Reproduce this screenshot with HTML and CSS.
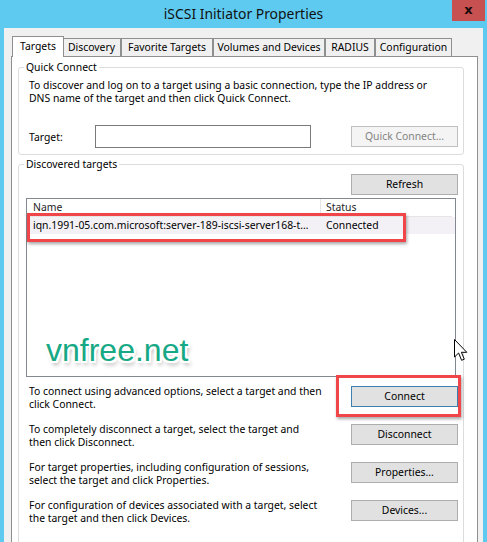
FILE: index.html
```html
<!DOCTYPE html>
<html>
<head>
<meta charset="utf-8">
<title>iSCSI Initiator Properties</title>
<link rel="stylesheet" href="styles.css">
</head>
<body>
<div class="window">
  <div class="titlebar">
    <div></div>
    <div class="title">iSCSI Initiator Properties</div>
    <div class="controls"><div class="close">x</div></div>
  </div>
  <div class="client">
    <div class="tabs">
      <div class="tab tab-targets active">Targets</div>
      <div class="tab tab-discovery">Discovery</div>
      <div class="tab tab-favorite">Favorite Targets</div>
      <div class="tab tab-volumes">Volumes and Devices</div>
      <div class="tab tab-radius">RADIUS</div>
      <div class="tab tab-config">Configuration</div>
    </div>
    <div class="panel">
      <fieldset class="group quick">
        <legend>Quick Connect</legend>
        <p class="desc">To discover and log on to a target using a basic connection, type the IP address or<br>DNS name of the target and then click Quick Connect.</p>
        <div class="target-row">
          <label class="target-label">Target:</label>
          <div class="target-input"></div>
          <div class="btn disabled">Quick Connect...</div>
        </div>
      </fieldset>
      <fieldset class="group discovered">
        <legend>Discovered targets</legend>
        <div class="refresh-row"><div class="btn">Refresh</div></div>
        <div class="listview">
          <div class="lv-header">
            <div class="col-name">Name</div>
            <div class="col-status">Status</div>
          </div>
          <div class="lv-row selected">
            <div class="col-name">iqn.1991-05.com.microsoft:server-189-iscsi-server168-t…</div>
            <div class="col-status">Connected</div>
          </div>
        </div>
        <div class="actions">
          <div class="action">
            <p class="desc">To connect using advanced options, select a target and then<br>click Connect.</p>
            <div class="btn default">Connect</div>
          </div>
          <div class="action">
            <p class="desc">To completely disconnect a target, select the target and<br>then click Disconnect.</p>
            <div class="btn">Disconnect</div>
          </div>
          <div class="action">
            <p class="desc">For target properties, including configuration of sessions,<br>select the target and click Properties.</p>
            <div class="btn">Properties...</div>
          </div>
          <div class="action">
            <p class="desc">For configuration of devices associated with a target, select<br>the target and then click Devices.</p>
            <div class="btn">Devices...</div>
          </div>
        </div>
      </fieldset>
    </div>
  </div>

  <div class="annot annot-row"></div>
  <div class="annot annot-connect"></div>
  <div class="watermark">vnfree.net</div>
  <svg class="cursor" width="14" height="23" viewBox="0 0 14 23">
    <path d="M0.5 0.5 L0.5 18 L4.6 14 L7.6 21.3 L10.3 20.2 L7.4 13.3 L12.8 13.3 Z" fill="#fff" stroke="#000" stroke-width="1" stroke-linejoin="miter"/>
  </svg>
</div>
</body>
</html>
```

FILE: styles.css
```css
* { box-sizing: border-box; }

html, body {
  margin: 0;
  padding: 0;
}

body {
  font-family: "Noto Sans", "Open Sans", sans-serif;
  font-size: 10.4px;
  color: #000;
  background: #5ecaf0;
}

.window {
  position: relative;
  width: 487px;
  height: 542px;
  overflow: hidden;
  background: #5ecaf0;
}

/* Title bar */
.titlebar {
  display: grid;
  grid-template-columns: 1fr auto 1fr;
  height: 28px;
}

.title {
  font-size: 13.9px;
  line-height: 28px;
  color: #111;
  white-space: nowrap;
}

.controls {
  display: flex;
  justify-content: flex-end;
  align-items: flex-start;
  padding-right: 2px;
}

.close {
  width: 33px;
  height: 21px;
  background: #c75050;
  color: #1a0a0a;
  font-family: "DejaVu Sans", sans-serif;
  font-weight: bold;
  font-size: 13px;
  line-height: 19px;
  text-align: center;
}

/* Client */
.client {
  margin: 0 4px;
  height: 514px;
  background: #f0f0f0;
  padding-top: 8px;
}

.tabs {
  display: flex;
  align-items: flex-end;
  height: 20px;
  padding-left: 10px;
}

.tab {
  height: 18px;
  border: 1px solid #8e8f8f;
  border-bottom: none;
  background: #f0f0f0;
  line-height: 17px;
  text-align: center;
  white-space: nowrap;
}

.tab-targets { width: 48px; }
.tab-discovery { width: 59px; }
.tab-favorite { width: 92px; }
.tab-volumes { width: 112px; }
.tab-radius { width: 50px; }
.tab-config { width: 77px; }

.tab.active {
  position: relative;
  z-index: 1;
  width: 52px;
  height: 21px;
  margin: 0 -2px -1px;
  background: #fff;
  line-height: 18px;
}

.panel {
  margin: 0 5px 0 7px;
  height: 600px;
  background: #fff;
  border: 1px solid #8e8f8f;
  padding: 3px 13px 0 6px;
}

/* Group boxes */
.group {
  margin: 0;
  border: 1px solid #dcdcdc;
  border-radius: 3px;
  padding: 5px 5px 6px 10px;
  min-width: 0;
}

.group legend {
  margin-left: -5px;
  padding: 0 2px;
  line-height: 14px;
}

.desc {
  margin: 0;
  line-height: 13px;
  white-space: nowrap;
}

.target-row {
  display: flex;
  align-items: center;
  margin-top: 20px;
  height: 23px;
}

.target-label {
  flex: none;
  width: 66px;
}

.target-input {
  width: 216px;
  height: 23px;
  border: 1px solid #7a7a7a;
  background: #fff;
}

.btn {
  flex: none;
  width: 107px;
  height: 21px;
  border: 1px solid #adadad;
  background: #e1e1e1;
  text-align: center;
  line-height: 19px;
  white-space: nowrap;
}

.target-row .btn {
  margin-left: auto;
}

.btn.disabled {
  border-color: #bfbfbf;
  background: #f4f4f4;
  color: #838383;
}

.btn.default {
  border-color: #3c7fb1;
}

.discovered {
  margin-top: 2px;
  padding-top: 3px;
  height: 420px;
}

.refresh-row {
  display: flex;
  justify-content: flex-end;
}

.listview {
  margin: 3px 2px 0 -3px;
  height: 179px;
  border: 1px solid #828790;
  background: #fff;
}

.lv-header,
.lv-row {
  display: flex;
  white-space: nowrap;
}

.lv-header {
  height: 18px;
  line-height: 17px;
  width: 425px;
  border-bottom: 1px solid #e5e5e5;
  color: #1e1e1e;
}

.lv-header .col-name {
  border-right: 1px solid #e5e5e5;
}

.col-name {
  flex: none;
  width: 294px;
  padding-left: 6px;
  overflow: hidden;
}

.col-status {
  flex: none;
  width: 131px;
  padding-left: 5px;
}

.lv-row {
  height: 17px;
  line-height: 16px;
  background: #f3f1f5;
}

.actions {
  display: flex;
  flex-direction: column;
  gap: 12px;
  margin-top: 8px;
}

.action {
  display: flex;
  justify-content: space-between;
  align-items: flex-start;
}

.action .btn {
  margin-top: 1px;
}

/* Overlays: annotations, watermark, pointer */
.annot {
  position: absolute;
  border: 3px solid #f0464a;
  box-shadow: 1px 2px 3px rgba(0, 0, 0, 0.35);
}

.annot-row {
  left: 27px;
  top: 213px;
  width: 379px;
  height: 29px;
}

.annot-connect {
  left: 336px;
  top: 375px;
  width: 125px;
  height: 42px;
}

.watermark {
  position: absolute;
  left: 46px;
  top: 332px;
  font-family: "Liberation Sans", Arial, sans-serif;
  font-size: 32px;
  line-height: 36px;
  color: #17a985;
  text-shadow:
    -2px 0 0 #fff, 2px 0 0 #fff, 0 -2px 0 #fff, 0 2px 0 #fff,
    -2px -2px 0 #fff, 2px 2px 0 #fff, -2px 2px 0 #fff, 2px -2px 0 #fff,
    2px 4px 4px rgba(0, 0, 0, 0.35);
}

.cursor {
  position: absolute;
  left: 454px;
  top: 339px;
}
```
